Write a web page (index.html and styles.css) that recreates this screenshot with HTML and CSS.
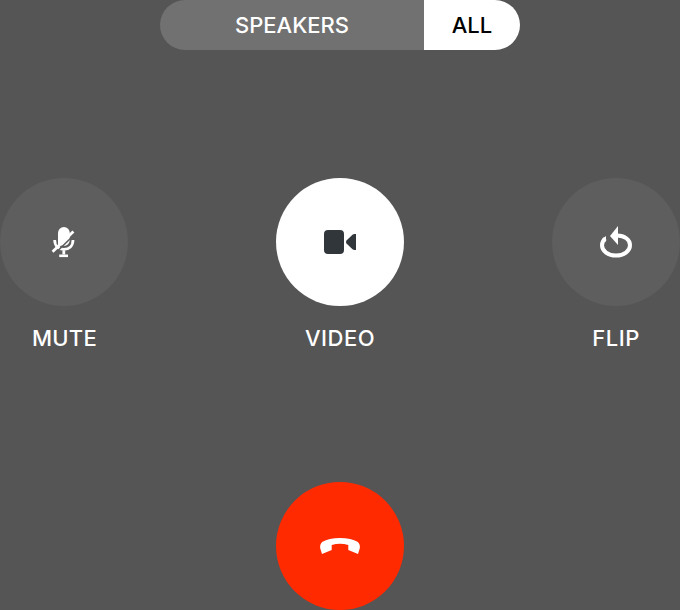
FILE: index.html
```html
<!DOCTYPE html>
<html lang="en">
<head>
<meta charset="utf-8">
<title>Call controls</title>
<link rel="stylesheet" href="styles.css">
</head>
<body>
<main class="call">
  <div class="tabs">
    <button class="tab tab-speakers">SPEAKERS</button>
    <button class="tab tab-all">ALL</button>
  </div>
  <div class="controls">
    <div class="control">
      <button class="round" aria-label="Mute">
        <svg class="icon" viewBox="0 0 48 48">
          <path d="M18 27V15a5.900 5.900 0 0 1 11.800 0v7a5.900 5.900 0 0 1-5.900 5.900z" fill="#fff"/>
          <path d="M14.700 22c0 6 3.800 9.400 9.100 9.400s9.200-3.400 9.200-9.400M23.800 31v5.500" fill="none" stroke="#fff" stroke-width="2.800"/>
          <path d="M19.200 37.800h8.800" stroke="#fff" stroke-width="2.600"/>
          <path d="M14.500 36L36 15" stroke="#5e5e5e" stroke-width="1.600"/>
          <path d="M12.600 33.800L33.400 13.400" stroke="#fff" stroke-width="2.800"/>
        </svg>
      </button>
      <span class="label label-mute">MUTE</span>
    </div>
    <div class="control">
      <button class="round round-active" aria-label="Video">
        <svg class="icon" viewBox="0 0 48 48" fill="#31363b">
          <rect x="8" y="12" width="20" height="24" rx="4"/>
          <path d="M30.500 22.500l6-5.800Q37.400 16 38.500 16H40v16h-1.500Q37.400 32 36.500 31.300l-6-5.800Q29.300 24 30.500 22.500z"/>
        </svg>
      </button>
      <span class="label">VIDEO</span>
    </div>
    <div class="control">
      <button class="round" aria-label="Flip">
        <svg class="icon" viewBox="0 0 48 48">
          <path d="M13.300 20.500C11.200 22.200 10 24.600 10 27.200c0 5.800 6.100 10.300 14 10.300s14-4.500 14-10.300S32.500 17.700 25 17.500" fill="none" stroke="#fff" stroke-width="4"/>
          <path d="M14 18v6l-4-3z" fill="#fff"/>
          <path d="M26 8v19l-8-9z" fill="#fff"/>
        </svg>
      </button>
      <span class="label">FLIP</span>
    </div>
  </div>
  <button class="round round-end" aria-label="End call">
    <svg class="icon-end" viewBox="0 0 60 50">
      <path d="M12 33.900L10.200 28.200Q9.600 24 12.500 21.800Q18.500 18 30 18T47.500 21.800Q50.400 24 49.800 28.200L48 33.900L38.300 29.900V24.900Q34 23.800 30 23.800T21.700 24.900V29.900z" fill="#fff"/>
    </svg>
  </button>
</main>
</body>
</html>
```
FILE: styles.css
```css
* {
  box-sizing: border-box;
}

body {
  margin: 0;
  background: #555;
  color: #fff;
  font-family: Inter, "Liberation Sans", sans-serif;
}

button {
  border: 0;
  padding: 0;
  font: inherit;
  color: inherit;
}

.call {
  width: 680px;
  height: 610px;
  display: flex;
  flex-direction: column;
  align-items: center;
}

.tabs {
  display: flex;
  width: 360px;
  height: 50px;
  border-radius: 25px;
  overflow: hidden;
  font-size: 22px;
  font-weight: 450;
  letter-spacing: 0.6px;
}

.tab-speakers {
  width: 264px;
  background: #717171;
}

.tab-all {
  width: 96px;
  background: #fff;
  color: #000;
}

.controls {
  display: flex;
  justify-content: space-between;
  width: 100%;
  margin-top: 128px;
}

.control {
  display: flex;
  flex-direction: column;
  align-items: center;
  width: 128px;
}

.round {
  display: flex;
  align-items: center;
  justify-content: center;
  width: 128px;
  height: 128px;
  border-radius: 50%;
  background: #5e5e5e;
}

.round-active {
  background: #fff;
}

.round-end {
  margin-top: 127px;
  background: #ff2a00;
}

.icon {
  width: 48px;
  height: 48px;
}

.icon-end {
  width: 60px;
  height: 50px;
  margin-top: -2px;
}

.label {
  margin-top: 16px;
  font-size: 22px;
  font-weight: 500;
  line-height: 33px;
  letter-spacing: 0.5px;
}

.label-mute {
  padding-left: 1px;
  letter-spacing: 0.2px;
}
```
